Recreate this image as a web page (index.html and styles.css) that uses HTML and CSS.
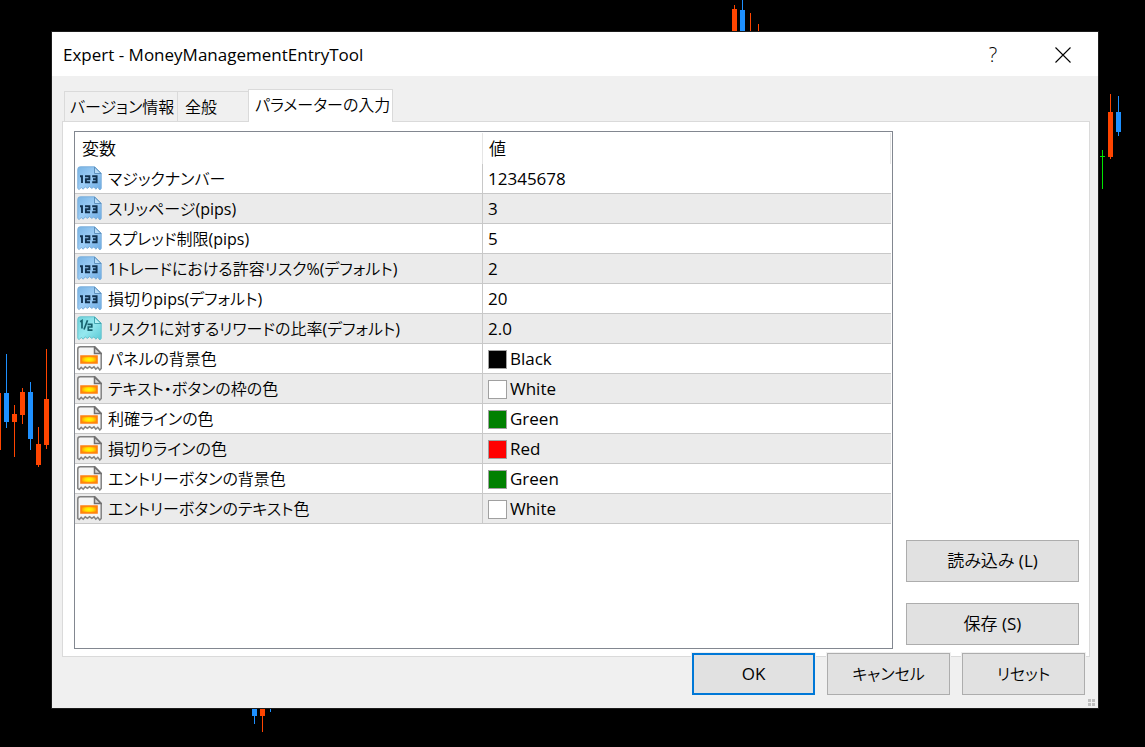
FILE: index.html
```html
<!DOCTYPE html>
<html lang="ja">
<head>
<meta charset="utf-8">
<title>Expert - MoneyManagementEntryTool</title>
<link rel="stylesheet" href="styles.css">
</head>
<body class="desktop">
<svg class="chart" width="1145" height="747" viewBox="0 0 1145 747" shape-rendering="crispEdges" aria-hidden="true">
  <path fill="#ff4500" d="M0 393h1v57H0zM12 414h5v8h-5zM14 405h1v52h-1zM20 392h5v23h-5zM22 388h1v36h-1zM36 444h5v21h-5zM38 427h1v40h-1zM44 399h5v46h-5zM46 349h1v100h-1zM1108 112h5v45h-5zM1110 94h1v65h-1zM260 700h5v16h-5zM262 700h1v32h-1zM732 9h5v30h-5zM734 5h1v30h-1zM750 13h1v30h-1zM758 24h1v20h-1z"/>
  <path fill="#1e90ff" d="M4 393h5v29H4zM6 354h1v74H6zM28 392h5v47h-5zM30 382h1v68h-1zM1116 112h5v20h-5zM1118 96h1v40h-1zM252 700h5v16h-5zM254 700h1v24h-1zM270 700h1v12h-1zM740 10h5v30h-5zM742 0h1v30h-1z"/>
  <path fill="#00e600" d="M1102 150h1v39h-1zM1100 156h5v1h-5z"/>
</svg>
<svg class="symbols" aria-hidden="true">
  <defs>
    <linearGradient id="blue" x1="0" y1="0" x2="1" y2="1"><stop offset="0" stop-color="#78b4e4"/><stop offset=".5" stop-color="#9dcdf6"/><stop offset="1" stop-color="#68a8e2"/></linearGradient>
    <linearGradient id="cyan" x1="0" y1="0" x2="1" y2="1"><stop offset="0" stop-color="#72d3dc"/><stop offset=".5" stop-color="#94e8ef"/><stop offset="1" stop-color="#58c8d4"/></linearGradient>
    <radialGradient id="glow"><stop offset="0" stop-color="#ffff00"/><stop offset=".5" stop-color="#ffe000"/><stop offset="1" stop-color="#ff9500"/></radialGradient>
    <path id="sheet" d="M3.2.8H17.8L24.2 7.2V22.5L22.8 24 20.8 21.3 18.8 23.2 17 20.8 14.8 22.4 12.6 20.6 10.4 22.4 8.2 20.8 6.2 23.2 4.2 21.4 2.2 23.6.8 22.5V3.2Q.8.8 3.2.8Z"/>
  </defs>
  <symbol id="int" viewBox="0 0 25 25">
    <use href="#sheet" fill="url(#blue)" stroke="#7db0dc"/>
    <path d="M17.5 1V7.5H24Z" fill="#b9dcf7" stroke="#5f92be"/>
    <path d="M3 10.3H5V17M8 10.2H12.4V13.2H8.9V16.2H13M15.2 10.2H19.6V16.2H15.2M16 13.2H19.6" fill="none" stroke="#12324f" stroke-width="1.9"/>
  </symbol>
  <symbol id="real" viewBox="0 0 25 25">
    <use href="#sheet" fill="url(#cyan)" stroke="#66c2cc"/>
    <path d="M17.5 1V7.5H24Z" fill="#b6f1f4" stroke="#43a5b0"/>
    <path d="M3.2 5.8 5 4.6V12.5M10.5 4.2 7 13.5M10.5 8.3H14.8V11H11.3V14.2H15.5" fill="none" stroke="#17616d" stroke-width="1.7"/>
  </symbol>
  <symbol id="color" viewBox="0 0 25 25">
    <use href="#sheet" fill="#f5f5f5" stroke="#808080" stroke-width="1.5"/>
    <path d="M17.5 1V7.5H24Z" fill="#d8d8d8" stroke="#707070" stroke-width="1.5"/>
    <path d="M4 10H20V17H4Z" fill="url(#glow)" stroke="#ff8010" stroke-width="1.6"/>
  </symbol>
</svg>

<main class="dialog">
  <header class="titlebar">
    <h1 class="title">Expert - MoneyManagementEntryTool</h1>
    <button class="caption help" aria-label="ヘルプ">?</button>
    <button class="caption" aria-label="閉じる"><svg width="16" height="16" viewBox="0 0 16 16"><path d="M.5.5 15.5 15.5M15.5.5.5 15.5" stroke="#000" stroke-width="1.1"/></svg></button>
  </header>
  <nav class="tabs" role="tablist">
    <button class="tab about" role="tab">バージョン情報</button>
    <button class="tab common" role="tab">全般</button>
    <button class="tab active" role="tab" aria-selected="true">パラメーターの入力</button>
  </nav>
  <section class="panel">
    <div class="list">
      <table class="params">
        <thead><tr><th class="name">変数</th><th class="value">値</th></tr></thead>
        <tbody>
          <tr><td><div class="cell"><svg class="icon"><use href="#int"/></svg>マジックナンバー</div></td><td>12345678</td></tr>
          <tr><td><div class="cell"><svg class="icon"><use href="#int"/></svg>スリッページ(pips)</div></td><td>3</td></tr>
          <tr><td><div class="cell"><svg class="icon"><use href="#int"/></svg>スプレッド制限(pips)</div></td><td>5</td></tr>
          <tr><td><div class="cell"><svg class="icon"><use href="#int"/></svg>1トレードにおける許容リスク%(デフォルト)</div></td><td>2</td></tr>
          <tr><td><div class="cell"><svg class="icon"><use href="#int"/></svg>損切りpips(デフォルト)</div></td><td>20</td></tr>
          <tr><td><div class="cell"><svg class="icon"><use href="#real"/></svg>リスク1に対するリワードの比率(デフォルト)</div></td><td>2.0</td></tr>
          <tr><td><div class="cell"><svg class="icon"><use href="#color"/></svg>パネルの背景色</div></td><td><div class="pick"><span class="swatch black"></span>Black</div></td></tr>
          <tr><td><div class="cell"><svg class="icon"><use href="#color"/></svg>テキスト・ボタンの枠の色</div></td><td><div class="pick"><span class="swatch white"></span>White</div></td></tr>
          <tr><td><div class="cell"><svg class="icon"><use href="#color"/></svg>利確ラインの色</div></td><td><div class="pick"><span class="swatch green"></span>Green</div></td></tr>
          <tr><td><div class="cell"><svg class="icon"><use href="#color"/></svg>損切りラインの色</div></td><td><div class="pick"><span class="swatch red"></span>Red</div></td></tr>
          <tr><td><div class="cell"><svg class="icon"><use href="#color"/></svg>エントリーボタンの背景色</div></td><td><div class="pick"><span class="swatch green"></span>Green</div></td></tr>
          <tr><td><div class="cell"><svg class="icon"><use href="#color"/></svg>エントリーボタンのテキスト色</div></td><td><div class="pick"><span class="swatch white"></span>White</div></td></tr>
        </tbody>
      </table>
    </div>
    <div class="side">
      <button class="btn">読み込み (L)</button>
      <button class="btn">保存 (S)</button>
    </div>
  </section>
  <footer class="actions">
    <button class="btn action primary">OK</button>
    <button class="btn action">キャンセル</button>
    <button class="btn action">リセット</button>
  </footer>
  <svg class="grip" width="7" height="7" viewBox="0 0 7 7" shape-rendering="crispEdges" aria-hidden="true"><path d="M0 0h3v3H0zM4 0h3v3H4zM0 4h3v3H0zM4 4h3v3H4z" fill="#bfbfbf"/></svg>
</main>
</body>
</html>
```
FILE: styles.css
```css
* { box-sizing: border-box; }

.desktop {
  margin: 0;
  min-height: 100vh;
  padding: 32px 47px 39px 52px;
  display: flex;
  position: relative;
  background: #000;
  color: #000;
  font: 17px/24px "Open Sans", "Noto Sans CJK JP DemiLight", "Noto Sans CJK JP", sans-serif;
  font-feature-settings: "palt";
}

.chart { position: absolute; top: 0; left: 0; }
.symbols { position: absolute; width: 0; height: 0; }

.dialog {
  flex: 1;
  min-width: 0;
  position: relative;
  display: flex;
  flex-direction: column;
  background: #f0f0f0;
  outline: 1px solid #1c1c1c;
}

button { font: inherit; font-feature-settings: inherit; color: inherit; margin: 0; padding: 0; }

.titlebar {
  height: 44px;
  padding: 1px 0 0 11px;
  display: flex;
  align-items: center;
  background: #fff;
}
.title { flex: 1; margin: 0; font-size: 17px; font-weight: 400; }
.caption {
  width: 70px;
  height: 43px;
  border: 0;
  background: none;
  display: flex;
  align-items: center;
  justify-content: center;
}
.help { font-size: 20px; font-weight: 300; }

.tabs {
  display: flex;
  align-items: flex-end;
  padding: 13px 12px 0;
}
.tab {
  height: 30px;
  border: 1px solid #dadada;
  border-bottom: 0;
  background: #f0f0f0;
  font-size: 16px;
  text-align: left;
  white-space: nowrap;
  padding-left: 5px;
}
.about { width: 114px; }
.common { width: 70px; border-left: 0; border-right: 0; padding-left: 7px; }
.active {
  width: 145px;
  height: 33px;
  margin-bottom: -1px;
  padding: 0 0 2px 6px;
  background: #fff;
  z-index: 1;
}

.panel {
  flex: 1;
  display: flex;
  gap: 13px;
  margin: 0 8px 0 10px;
  padding: 9px 10px 7px 11px;
  background: #fff;
  border: 1px solid #dadada;
}
.list { flex: 1; min-width: 0; border: 1px solid #828790; padding: 1px 1px 0 0; }
.params { width: 100%; table-layout: fixed; border-collapse: separate; border-spacing: 0; }
.params th {
  height: 31px;
  padding: 1px 7px 0;
  font-weight: 400;
  text-align: left;
  border-right: 1px solid #e5e5e5;
}
.params .name { width: 50%; }
.params .value { padding-left: 6px; }
.params td {
  height: 30px;
  padding: 1px 5px 0;
  border-bottom: 1px solid #c8c8c8;
  white-space: nowrap;
}
.params td:first-child { padding: 0 0 0 2px; border-right: 1px solid #c8c8c8; }
.params tr:nth-child(even) td { background: #ebebeb; }
.cell { display: flex; align-items: center; gap: 6px; font-size: 16px; }
.icon { width: 25px; height: 25px; flex: none; }
.pick { display: flex; align-items: center; gap: 3px; }
.swatch { width: 19px; height: 19px; border: 1px solid #a0a0a0; }
.black { background: #000; }
.white { background: #fff; }
.green { background: #008000; }
.red { background: #f00; }

.side {
  width: 173px;
  display: flex;
  flex-direction: column;
  justify-content: flex-end;
  gap: 21px;
  padding-bottom: 4px;
}
.btn {
  height: 42px;
  border: 1px solid #adadad;
  background: #e1e1e1;
}
.actions {
  display: flex;
  justify-content: flex-end;
  gap: 12px;
  margin-top: -4px;
  padding: 0 13px 13px 0;
}
.action { width: 123px; box-shadow: 0 0 0 1px #f0f0f0; z-index: 1; font-size: 16px; }
.primary { border: 2px solid #0078d7; font-size: 17px; }
.grip { position: absolute; right: 3px; bottom: 2px; }
```
